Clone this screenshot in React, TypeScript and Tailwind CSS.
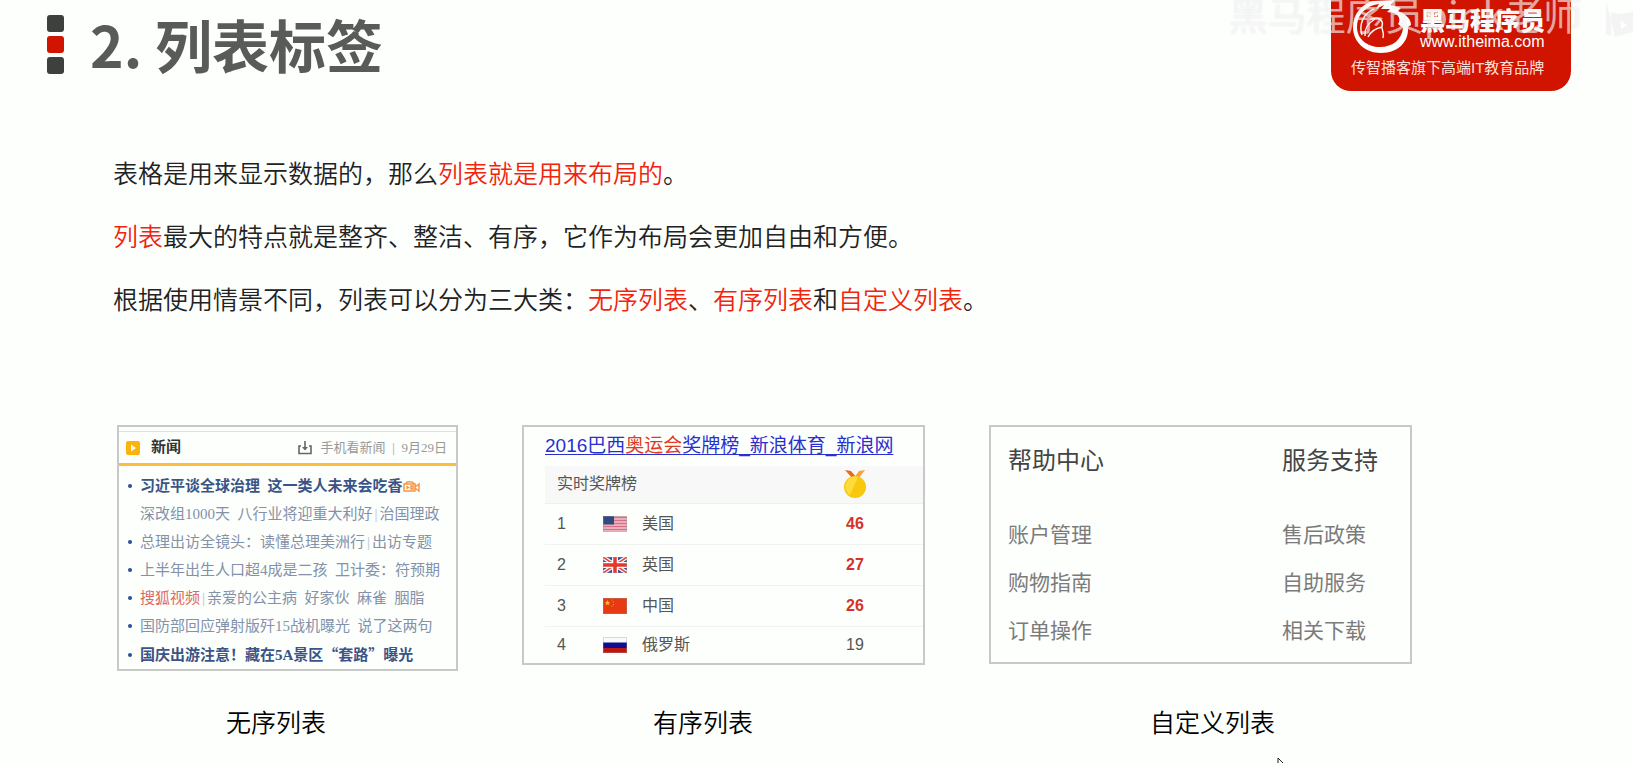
import React from "react";

const sans = "font-['Noto_Sans_CJK_SC',sans-serif]";
const arial = "font-['Liberation_Sans','Noto_Sans_CJK_SC',sans-serif]";
const song = "font-['Liberation_Serif','Noto_Sans_CJK_SC',serif]";

function Red({ children }: { children: React.ReactNode }) {
  return <span className="text-[#f0250e]">{children}</span>;
}

function HorseBadge() {
  return (
    <svg viewBox="0 0 60 60" className="h-15 w-15 shrink-0" aria-hidden="true">
      <path
        fill="#fff"
        fillRule="evenodd"
        d="M22 1L44 0L40 5L50 8L47 11C55 14 60 19 60 25L57 27C58 42 47 53 30 53C14 53 2 42 2 27C2 15 10 4 22 1ZM23 5C13 8 6 16 6 27C6 39 16 47 29 47C42 47 51 39 52 28L47 24C50 20 48 15 43 13L36 12L39 9L30 9L33 5L25 9L28 4Z"
      />
      <path
        d="M11 35C8 26 11 14 23 9M19 20C26 15 33 20 31 26C30 30 34 32 32 38M31 27C26 28 20 31 17 37M24 19C19 22 13 28 14 36"
        fill="none"
        stroke="#fff"
        strokeWidth="1.4"
      />
    </svg>
  );
}

function Header() {
  return (
    <header className="relative flex items-start justify-between overflow-hidden pl-[47px] pr-[62px]">
      <div className="flex items-start gap-[26px]">
        <div className="flex flex-col gap-1 pt-[15px]" aria-hidden="true">
          <span className="size-[17px] rounded-[3px] bg-[#3d403d]" />
          <span className="size-[17px] rounded-[3px] bg-[#d01400]" />
          <span className="size-[17px] rounded-[3px] bg-[#3d403d]" />
        </div>
        <h1 className="pt-[3px] text-[57px] leading-[80px] font-bold text-[#595b59]">2. 列表标签</h1>
      </div>
      <div className="h-[91px] w-[240px] rounded-b-[20px] bg-[#d01400] px-[20px] text-white">
        <div className="flex gap-[9px]">
          <HorseBadge />
          <div className="pt-1 whitespace-nowrap">
            <p className="text-[25px] leading-[30px] font-black">黑马程序员</p>
            <p className="font-['Liberation_Sans',sans-serif] text-[16px] leading-[16px]">www.itheima.com</p>
          </div>
        </div>
        <p className={`${arial} text-[15px] leading-[16px] whitespace-nowrap text-[#ffe0dc]`}>
          传智播客旗下高端IT教育品牌
        </p>
      </div>
      <div className="absolute top-[-15px] right-[51px] text-[39px] leading-[56px] whitespace-nowrap text-white/60 [text-shadow:0_0_2px_rgba(120,120,120,0.2)]">
        黑马程序员pink老师
      </div>
      <svg viewBox="0 0 30 38" className="absolute top-0 right-0 h-[38px] w-[30px]" aria-hidden="true">
        <path d="M3 0V34L8 36V12L18 14L30 12V32L12 37" fill="#f3f4f3" />
        <path d="M18 21L24 25L18 29Z" fill="#fff" />
      </svg>
    </header>
  );
}

function Bar() {
  return <span className="inline-block w-[7px] text-center text-[#b9c0ca]">|</span>;
}

const gap = "\u00a0\u00a0";

const news: { body: React.ReactNode; bullet: boolean; bold: boolean }[] = [
  {
    bullet: true,
    bold: true,
    body: (
      <>
        习近平谈全球治理{gap}这一类人未来会吃香
        <svg viewBox="0 0 18 12" className="inline-block h-3 w-[18px] align-[-1px]" aria-hidden="true">
          <path
            d="M3 3.5C3 1.5 9 .8 11 3.5M1 4h11v7H1zM12 7l4-3v7l-4-3M4 6v3M4 7.5h2.500M8 6h2v3H8z"
            fill="none"
            stroke="#f79646"
            strokeWidth="1.5"
          />
        </svg>
      </>
    ),
  },
  { bullet: false, bold: false, body: <>深改组1000天{gap}八行业将迎重大利好<Bar />治国理政</> },
  { bullet: true, bold: false, body: <>总理出访全镜头：读懂总理美洲行<Bar />出访专题</> },
  { bullet: true, bold: false, body: <>上半年出生人口超4成是二孩{gap}卫计委：符预期</> },
  {
    bullet: true,
    bold: false,
    body: <><span className="text-[#dc6a63]">搜狐视频</span><Bar />亲爱的公主病{gap}好家伙{gap}麻雀{gap}胭脂</>,
  },
  { bullet: true, bold: false, body: <>国防部回应弹射版歼15战机曝光{gap}说了这两句</> },
  {
    bullet: true,
    bold: true,
    body: <>国庆出游注意！藏在5A景区<span className={sans}>“套路”</span>曝光</>,
  },
];

function NewsCard() {
  return (
    <div className={`${song} overflow-hidden border-2 border-[#c6c9c6]`}>
      <div className="mt-1 flex items-center justify-between border-t border-b-[3px] border-t-[#dfe2df] border-b-[#fdbf3b] pr-[9px] pl-[7px] leading-[31px]">
        <div className="flex items-center gap-[11px]">
          <svg viewBox="0 0 14 14" className="size-[14px]" aria-hidden="true">
            <rect width="14" height="14" rx="2" fill="#fdb30c" />
            <path d="M5 3.500L10 7L5 10.500Z" fill="#fff" />
          </svg>
          <h2 className="text-[15px] font-bold text-[#333]">新闻</h2>
        </div>
        <div className="flex items-center text-[13px] whitespace-nowrap text-[#999]">
          <svg viewBox="0 0 14 14" className="mr-2 size-[14px]" aria-hidden="true">
            <path d="M3 5H1v7.500h12V5h-2M7 0v7" fill="none" stroke="#666" strokeWidth="1.600" />
            <path d="M4 6h6L7 9.500Z" fill="#666" />
          </svg>
          手机看新闻<span className="w-[16px] text-center">|</span>9月29日
        </div>
      </div>
      <ul className="pt-[6px] pl-[9px] text-[15px] leading-[28px] whitespace-nowrap">
        {news.map((item, i) => (
          <li key={i} className="flex items-center">
            <span className="w-[12px]">
              {item.bullet && <span className="block size-1 rounded-full bg-[#2a4f9c]" />}
            </span>
            <a href="#" className={item.bold ? "font-bold text-[#3a5487]" : "text-[#8391a9]"}>
              {item.body}
            </a>
          </li>
        ))}
      </ul>
    </div>
  );
}

function Flag({ code }: { code: string }) {
  return (
    <svg viewBox="0 0 24 16" className="h-4 w-6" aria-hidden="true">
      {code === "us" && (
        <>
          <rect width="24" height="16" fill="#efc3cb" />
          <path d="M0 1.500h24M0 4.500h24M0 7.500h24M0 10.500h24M0 13.500h24" stroke="#d96f84" strokeWidth="1.500" />
          <rect width="11" height="8.500" fill="#2f4a80" />
        </>
      )}
      {code === "gb" && (
        <>
          <rect width="24" height="16" fill="#3a4a9c" />
          <path d="M0 0L24 16M24 0L0 16" stroke="#fff" strokeWidth="4" />
          <path d="M0 0L24 16M24 0L0 16" stroke="#e2453c" strokeWidth="1.500" />
          <path d="M12 0V16M0 8H24" stroke="#fff" strokeWidth="6" />
          <path d="M12 0V16M0 8H24" stroke="#e5382c" strokeWidth="3.500" />
        </>
      )}
      {code === "cn" && (
        <>
          <rect width="24" height="16" fill="#e83a12" />
          <path d="M4.500 2l.8 1.900 2 .1-1.600 1.300.6 2-1.800-1.100-1.800 1.100.6-2L1.700 4l2-.1z" fill="#fbc02d" />
          <path d="M8.500 2h1M10 4h1M10 6.500h1M8.500 8h1" stroke="#f6a21e" />
        </>
      )}
      {code === "ru" && (
        <>
          <rect width="24" height="16" fill="#fafafa" />
          <path d="M0 5.500h24v5.500H0z" fill="#0d0d93" />
          <path d="M0 11h24v5H0z" fill="#c0140e" />
        </>
      )}
      <rect x=".5" y=".5" width="23" height="15" fill="none" stroke="#999" strokeOpacity=".35" />
    </svg>
  );
}

const medals = [
  { rank: 1, code: "us", name: "美国", gold: 46 },
  { rank: 2, code: "gb", name: "英国", gold: 27 },
  { rank: 3, code: "cn", name: "中国", gold: 26 },
  { rank: 4, code: "ru", name: "俄罗斯", gold: 19 },
];

function MedalCard() {
  return (
    <div className={`${arial} border-2 border-[#c6c9c6] pl-[21px]`}>
      <h2 className="pt-[5px] text-[19px] leading-[28px] whitespace-nowrap">
        <a href="#" className="text-[#2a2fd0] underline underline-offset-2">
          2016巴西<span className="text-[#e03a22]">奥运会</span>奖牌榜_新浪体育_新浪网
        </a>
      </h2>
      <table className="mt-[6px] w-full table-fixed border-collapse text-[16px] text-[#555]">
        <colgroup>
          <col className="w-[58px]" />
          <col className="w-[30px]" />
          <col />
          <col className="w-[114px]" />
        </colgroup>
        <thead>
          <tr className="h-[37px] border-b border-[#eff1ef] bg-[#f7f8f7]">
            <th colSpan={3} className="pl-3 text-left text-[16px] font-normal">
              实时奖牌榜
            </th>
            <th className="pl-[34px]" aria-label="金牌">
              <svg viewBox="0 0 24 28" className="h-7 w-6" aria-hidden="true">
                <path d="M2 0L8 1L14 8L10 9Z" fill="#f0641e" />
                <path d="M22 0L16 1L11 8L15 9Z" fill="#f7a23c" />
                <circle cx="12" cy="17" r="11" fill="#f9c80e" />
                <path d="M3 20A10 10 0 0 1 15 7L7 25A10 10 0 0 1 3 20Z" fill="#fddb3a" />
              </svg>
            </th>
          </tr>
        </thead>
        <tbody>
          {medals.map((m) => (
            <tr key={m.rank} className="h-[41px] border-b border-[#f1f3f1] last:h-[37px] last:border-b-0">
              <td className="pl-3">{m.rank}</td>
              <td>
                <Flag code={m.code} />
              </td>
              <td className="pl-[9px]">{m.name}</td>
              <td className={m.gold > 20 ? "pl-[37px] font-bold text-[#d5322a]" : "pl-[37px]"}>{m.gold}</td>
            </tr>
          ))}
        </tbody>
      </table>
    </div>
  );
}

const help = [
  { title: "帮助中心", items: ["账户管理", "购物指南", "订单操作"] },
  { title: "服务支持", items: ["售后政策", "自助服务", "相关下载"] },
];

function HelpCard() {
  return (
    <div className="flex justify-between border-2 border-[#c6c9c6] pt-[14px] pr-[32px] pb-[9px] pl-[17px]">
      {help.map((group) => (
        <dl key={group.title}>
          <dt className="mb-[32px] text-[24px] leading-[36px] text-[#444]">{group.title}</dt>
          {group.items.map((item) => (
            <dd key={item} className="text-[21px] leading-[48px] text-[#7b7b7b]">
              {item}
            </dd>
          ))}
        </dl>
      ))}
    </div>
  );
}

const caption = "text-[25px] leading-[38px] font-[350] text-black pt-[31px]";

export default function App() {
  return (
    <div className={`${sans} relative min-h-screen overflow-hidden bg-[#fdfffd]`}>
      <Header />
      <main className="pr-[221px] pl-[113px]">
        <div className="pt-[50px] text-[25px] leading-[63px] font-[350] text-[#222]">
          <p>
            表格是用来显示数据的，那么<Red>列表就是用来布局的</Red>。
          </p>
          <p>
            <Red>列表</Red>最大的特点就是整齐、整洁、有序，它作为布局会更加自由和方便。
          </p>
          <p>
            根据使用情景不同，列表可以分为三大类：<Red>无序列表</Red>、<Red>有序列表</Red>和
            <Red>自定义列表</Red>。
          </p>
        </div>
        <div className="mt-[95px] ml-1 grid grid-cols-[341fr_403fr_423fr] gap-x-16">
          <figure className="row-span-2 grid grid-rows-subgrid items-start">
            <NewsCard />
            <figcaption className={`${caption} pl-[109px]`}>无序列表</figcaption>
          </figure>
          <figure className="row-span-2 grid grid-rows-subgrid items-start">
            <MedalCard />
            <figcaption className={`${caption} pl-[131px]`}>有序列表</figcaption>
          </figure>
          <figure className="row-span-2 grid grid-rows-subgrid items-start">
            <HelpCard />
            <figcaption className={`${caption} pl-[161px]`}>自定义列表</figcaption>
          </figure>
        </div>
      </main>
      <svg viewBox="0 0 12 19" className="absolute top-[757px] left-[1277px] h-[19px] w-3" aria-hidden="true">
        <path d="M1 1V15L4 12L6.500 18L8.500 17L6 11H11Z" fill="#fff" stroke="#222" />
      </svg>
    </div>
  );
}
